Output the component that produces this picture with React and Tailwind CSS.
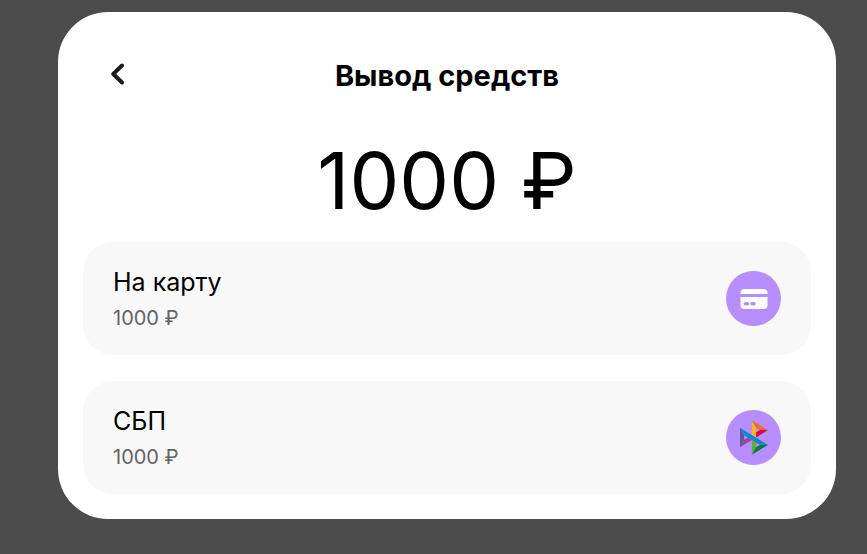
function BackIcon() {
  return (
    <svg width="20" height="24" viewBox="0 0 20 24" fill="none" aria-hidden="true">
      <path
        d="M14 3.5L5.2 12L14 20.5"
        stroke="#1c1c1c"
        strokeWidth="4"
        strokeLinecap="round"
        strokeLinejoin="round"
      />
    </svg>
  );
}

function CardIcon() {
  return (
    <svg width="28" height="20" viewBox="0 0 28 20" fill="none" aria-hidden="true">
      <path d="M0.5 5V4a4 4 0 0 1 4-4h19a4 4 0 0 1 4 4v1z" fill="#fff" />
      <path
        fillRule="evenodd"
        d="M0.5 8h27v8a4 4 0 0 1-4 4h-19a4 4 0 0 1-4-4zM5.5 13a1.8 1.8 0 0 0 0 3.6h2a1.8 1.8 0 0 0 0-3.6zM12 13a1.8 1.8 0 0 0 0 3.6h2a1.8 1.8 0 0 0 0-3.6z"
        fill="#fff"
      />
    </svg>
  );
}

function SbpIcon() {
  return (
    <svg width="28" height="35" viewBox="0 0 97.3 120" aria-hidden="true">
      <path d="M0 26.12l14.532 25.975v15.844L.017 93.863 0 26.12z" fill="#5b57a2" />
      <path d="M55.797 42.643l13.617-8.346 27.868-.026-41.485 25.414V42.643z" fill="#d90751" />
      <path d="M55.72 25.967l.077 34.39-14.566-8.95V0l14.49 25.967z" fill="#fab718" />
      <path d="M97.282 34.271l-27.869.026-13.693-8.33L41.231 0l56.05 34.271z" fill="#ed6f26" />
      <path d="M55.797 94.007V77.322l-14.566-8.78.008 51.458 14.558-25.993z" fill="#63b22f" />
      <path d="M69.38 85.737L14.531 52.095 0 26.12l97.223 59.583-27.844.034z" fill="#1487c9" />
      <path d="M41.24 120l14.556-25.993 13.583-8.27 27.843-.034L41.24 120z" fill="#017f36" />
      <path d="M.017 93.863l41.333-25.32-13.896-8.526-12.922 7.922L.017 93.863z" fill="#984995" />
    </svg>
  );
}

const methods = [
  { title: "На карту", amount: "1000 ₽", Icon: CardIcon },
  { title: "СБП", amount: "1000 ₽", Icon: SbpIcon },
];

export default function App() {
  return (
    <div className="min-h-screen bg-[#4c4c4c] pt-3 pr-[31px] pb-[35px] pl-[58px] font-['Inter','Liberation_Sans',sans-serif] text-black">
      <main className="rounded-[50px] bg-white p-[25px]">
        <header className="grid grid-cols-[1fr_auto_1fr] items-center pt-[22px]">
          <button type="button" aria-label="Назад" className="ml-[25px] flex h-7 w-5 items-start justify-center">
            <BackIcon />
          </button>
          <h1 className="text-[29px] leading-[34px] font-[650]">Вывод средств</h1>
        </header>
        <p className="mt-[47px] text-center text-[79px] leading-[80px]">1000 ₽</p>
        <div className="mt-[22px] flex flex-col gap-[26px]">
          {methods.map(({ title, amount, Icon }) => (
            <button
              key={title}
              type="button"
              className="flex items-center justify-between rounded-[30px] bg-[#f8f8f8] px-[30px] py-[25px] text-left"
            >
              <span className="flex flex-col gap-[9px]">
                <span className="text-[25px] leading-[30px]">{title}</span>
                <span className="text-[20px] leading-6 text-[#636363]">{amount}</span>
              </span>
              <span className="flex size-[55px] items-center justify-center rounded-full bg-[#b68eff]">
                <Icon />
              </span>
            </button>
          ))}
        </div>
      </main>
    </div>
  );
}
